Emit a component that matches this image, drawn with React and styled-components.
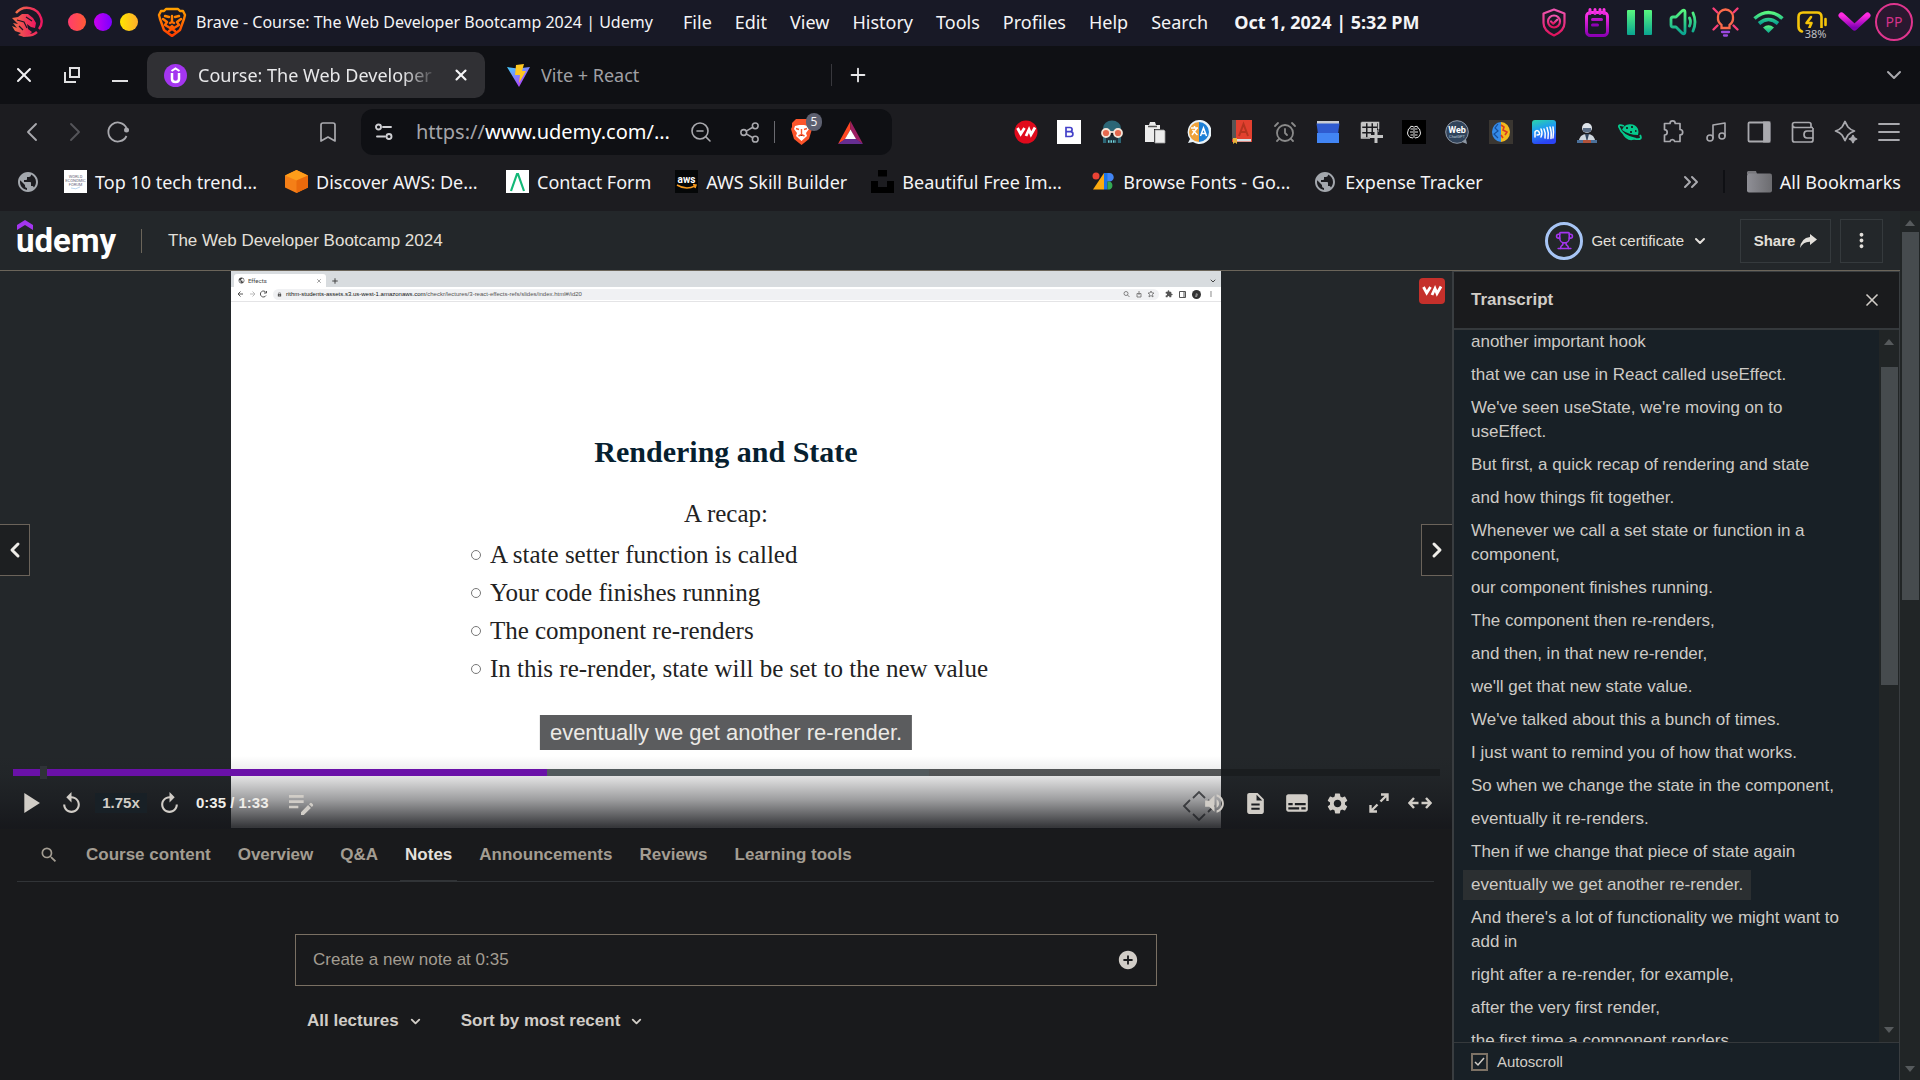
import React from "react";
import styled, { createGlobalStyle, css } from "styled-components";
import {
  X, Plus, ChevronDown, ChevronLeft, ChevronRight, ChevronsRight, Bookmark, ZoomOut, Share2,
  Music, AlarmClock, Trophy,
} from "lucide-react";
import {
  MdPlayArrow, MdReplay, MdVolumeUp, MdSettings, MdSubtitles, MdDescription, MdEditNote,
  MdAddCircle, MdSearch, MdMoreVert, MdPublic, MdLock, MdExtension,
} from "react-icons/md";

const Global = createGlobalStyle`
  * { box-sizing: border-box; }
  body { margin: 0; background: #191a1c; overflow: hidden; }
  button, input, select { font: inherit; color: inherit; margin: 0; }
  button { background: none; border: 0; padding: 0; cursor: pointer; }
  a { color: inherit; text-decoration: none; }
  svg { display: block; flex: none; }
  h1, h2, p, ul { margin: 0; padding: 0; }
`;

const Screen = styled.div`
  display: flex;
  flex-direction: column;
  height: 100vh;
  font: 17px/24px "Liberation Sans", Arial, sans-serif;
  color: #d1cdc7;
`;

/* ---------- desktop bar ---------- */
const Chrome = styled.div`
  font: 18px/24px "Noto Sans", sans-serif;
  color: #f4f4f6;
  white-space: nowrap;
`;
const DesktopBar = styled.header`
  display: flex;
  align-items: center;
  height: 46px;
  padding: 0 7px 2px 11px;
  background: #181926;
`;
const Dots = styled.div`
  display: flex;
  gap: 8px;
  margin: 0 19px 0 24px;
`;
const Dot = styled.button`
  width: 18px;
  height: 18px;
  border-radius: 50%;
  background: ${(p) => p.$fill};
`;
const WindowTitle = styled.span`
  width: 476px;
  margin: 0 11px 0 9px;
  font-size: 16px;
`;
const AppMenu = styled.nav`
  display: flex;
  gap: 23px;
`;
const Clock = styled.time`
  margin-left: 26px;
  font-weight: 700;
`;
const Tray = styled.div`
  display: flex;
  align-items: center;
  margin-left: auto;
`;
const TrayButton = styled.button`
  display: grid;
  place-items: center;
  width: ${(p) => (p.$tight ? "42px" : "43px")};
  height: 44px;
`;
const Avatar = styled.button`
  width: 38px;
  height: 38px;
  border: 2px solid #e0358e;
  border-radius: 50%;
  background: #2a1830;
  color: #d4328a;
  font-size: 14px;
  line-height: 24px;
`;
const Battery = styled.span`
  position: relative;
  display: block;
`;
const BatteryLevel = styled.span`
  position: absolute;
  right: 0;
  bottom: -6px;
  background: #181926;
  font-size: 11px;
  line-height: 11px;
  color: #c0c0c4;
`;

/* ---------- browser tabs ---------- */
const TabStrip = styled.div`
  display: flex;
  align-items: center;
  height: 58px;
  padding: 0 14px 0 12px;
  background: #0f1014;
`;
const WindowButtons = styled.div`
  display: flex;
  gap: 24px;
  margin-right: 15px;
`;
const IconButton = styled.button`
  display: grid;
  place-items: center;
  width: ${(p) => p.$w || 24}px;
  height: 32px;
  color: ${(p) => p.$color || "#a9a9ae"};
`;
const BrowserTab = styled.div`
  display: flex;
  align-items: center;
  gap: 11px;
  width: 338px;
  height: 46px;
  padding: 0 12px 0 ${(p) => (p.$active ? "17px" : "22px")};
  border-radius: 10px;
  background: ${(p) => (p.$active ? "#303034" : "transparent")};
  color: ${(p) => (p.$active ? "#e8e8ea" : "#a0a0a5")};
`;
const TabTitle = styled.span`
  flex: 1;
  overflow: hidden;
  ${(p) => p.$fade && css`mask-image: linear-gradient(90deg, #000 85%, transparent);`}
`;
const StripDivider = styled.span`
  width: 1px;
  height: 22px;
  margin: 0 14px 0 8px;
  background: #38383d;
`;
const End = styled.div`
  display: flex;
  align-items: center;
  margin-left: auto;
`;

/* ---------- toolbar ---------- */
const Toolbar = styled.div`
  display: flex;
  align-items: center;
  height: 56px;
  padding: 0 19px 0 16px;
  background: #1c1c20;
`;
const History = styled.div`
  display: flex;
  gap: 11px;
  width: 300px;
`;
const AddressBar = styled.div`
  display: flex;
  align-items: center;
  width: 531px;
  height: 46px;
  margin-left: 21px;
  padding: 0 28px 0 11px;
  border-radius: 12px;
  background: #0f1014;
`;
const AddressText = styled.span`
  width: 257px;
  margin: 0 3px 0 20px;
  font-size: 20px;
  color: #fff;
  span { color: #a4a4a9; }
`;
const Shield = styled.button`
  position: relative;
  margin: 0 26px 0 16px;
`;
const ShieldCount = styled.span`
  position: absolute;
  left: 15px;
  top: -6px;
  width: 16px;
  height: 18px;
  border-radius: 8px;
  background: #5d6070;
  font-size: 12px;
  line-height: 18px;
`;
const BarRule = styled.span`
  width: 1px;
  height: 22px;
  background: #6a6a70;
`;
const Extensions = styled.div`
  display: flex;
  justify-content: space-between;
  flex: 1;
  margin-left: 122px;
`;

/* ---------- bookmarks ---------- */
const BookmarksBar = styled.nav`
  display: flex;
  align-items: center;
  gap: 24px;
  height: 51px;
  padding: 0 19px 8px 16px;
  background: #1c1c20;
`;
const BookmarkLink = styled.a`
  display: flex;
  align-items: center;
  gap: 8px;
  width: ${(p) => (p.$clipped ? "197px" : "auto")};
`;
const BookmarkRule = styled.span`
  width: 2px;
  height: 23px;
  margin: 0 22px 0 20px;
  background: #0f1014;
`;

/* ---------- course page ---------- */
const Page = styled.div`
  display: flex;
  flex: 1;
  min-height: 0;
`;
const Course = styled.div`
  display: flex;
  flex-direction: column;
  flex: 1;
  min-width: 0;
`;
const CourseHeader = styled.header`
  display: flex;
  align-items: center;
  flex: none;
  height: 60px;
  padding: 0 17px 0 16px;
  border-bottom: 1px solid #6b655a;
  background: #23272a;
  color: #e3e0db;
`;
const Logo = styled.a`
  position: relative;
  width: 101px;
  font: 700 33px/44px Roboto, sans-serif;
  color: #fff;
  svg { position: absolute; left: 1px; top: 1px; }
`;
const HeaderRule = styled.span`
  width: 1px;
  height: 24px;
  margin: 0 26px 0 24px;
  background: #6b655a;
`;
const CourseTitle = styled.h1`
  font-size: 17px;
  font-weight: 400;
`;
const Certificate = styled.button`
  display: flex;
  align-items: center;
  gap: 8px;
  margin-right: 23px;
  font-size: 15px;
`;
const Ring = styled.span`
  display: grid;
  place-items: center;
  width: 38px;
  height: 38px;
  border: 3px solid #a7c5f5;
  border-radius: 50%;
  color: #a435f0;
`;
const HeaderButton = styled.button`
  display: flex;
  align-items: center;
  justify-content: center;
  gap: 5px;
  width: ${(p) => p.$w}px;
  height: 44px;
  margin-left: 9px;
  border: 1px solid #353a3d;
  font-size: 15px;
  font-weight: 700;
`;
const Columns = styled.div`
  display: flex;
  flex: 1;
  min-height: 0;
`;
const MainColumn = styled.main`
  flex: 1;
  min-width: 0;
`;

/* ---------- player ---------- */
const Stage = styled.section`
  position: relative;
  display: flex;
  justify-content: center;
  height: 558px;
  padding-bottom: 1px;
  background: #23272a;
`;
const Slide = styled.div`
  aspect-ratio: 16 / 9;
  height: 100%;
  background: #fff;
  color: #222;
`;
const MiniTabs = styled.div`
  display: flex;
  align-items: flex-end;
  height: 16px;
  padding: 0 4px 0 3px;
  background: #d8dcdf;
  color: #444;
`;
const MiniTab = styled.div`
  display: flex;
  align-items: center;
  gap: 3px;
  width: 92px;
  height: 13px;
  margin-right: 5px;
  padding: 0 4px;
  border-radius: 3px 3px 0 0;
  background: #fff;
  font: 6px/8px Roboto, sans-serif;
`;
const MiniAction = styled.span`
  display: flex;
  align-items: center;
  height: 13px;
`;
const MiniBar = styled.div`
  display: flex;
  align-items: center;
  gap: 6px;
  height: 15px;
  padding: 0 6px;
  border-bottom: 1px solid #e4e4e6;
  color: #555;
`;
const MiniUrl = styled.div`
  display: flex;
  align-items: center;
  gap: 4px;
  flex: 1;
  height: 11px;
  padding: 0 4px;
  border-radius: 6px;
  background: #f0f1f3;
  font: 6px/8px "Liberation Sans", sans-serif;
  color: #555;
  b { font-weight: 400; color: #111; }
`;
const Deck = styled.div`
  display: flex;
  flex-direction: column;
  padding-top: 131px;
  font: 25px/38px "Liberation Serif", serif;
  h2 {
    font-size: 30px;
    line-height: 38px;
    text-align: center;
    color: #06202f;
  }
  p {
    margin-top: 24px;
    text-align: center;
  }
`;
const Points = styled.ul`
  margin: 3px 0 0 240px;
  list-style: none;
`;
const Point = styled.li`
  display: flex;
  align-items: center;
  gap: 9px;
  &::before {
    content: "";
    width: 8px;
    height: 8px;
    border: 1px solid #777;
    border-radius: 50%;
  }
`;
const Caption = styled.p`
  position: absolute;
  left: 50%;
  bottom: 79px;
  transform: translateX(-50%);
  padding: 0 10px;
  background: #5b5c5e;
  color: #eceae6;
  font-size: 22px;
  line-height: 35px;
  white-space: nowrap;
`;
const Watermark = styled.svg`
  position: absolute;
  right: 236px;
  bottom: 6px;
`;
const SideNav = styled.button`
  position: absolute;
  top: 253px;
  ${(p) => p.$side}: 0;
  display: grid;
  place-items: center;
  width: ${(p) => (p.$side === "left" ? "30px" : "31px")};
  height: 52px;
  border: 1px solid #6b635a;
  border-${(p) => p.$side}: 0;
  background: #1d1f21;
  color: #efede9;
`;
const VnBadge = styled.button`
  position: absolute;
  top: 7px;
  right: 7px;
  display: grid;
  place-items: center;
  width: 26px;
  height: 26px;
  border-radius: 4px;
  background: #c5302b;
`;
const Controls = styled.div`
  position: absolute;
  inset: auto 0 0 0;
  padding: 13px 12px 0 13px;
  height: 73px;
  background: linear-gradient(rgba(21, 22, 26, 0), rgba(21, 22, 26, 0.1) 26%, rgba(21, 22, 26, 0.42) 60%, rgba(21, 22, 26, 0.86) 97%);
`;
const Progress = styled.div`
  position: relative;
  height: 7px;
  background: rgba(23, 26, 28, 0.72);
`;
const ProgressFill = styled.div`
  position: absolute;
  inset: 0 auto 0 0;
  background: ${(p) => p.$fill};
`;
const Knob = styled.div`
  position: absolute;
  left: 27px;
  top: -3px;
  width: 7px;
  height: 13px;
  background: #2f3337;
`;
const ControlRow = styled.div`
  display: flex;
  align-items: center;
  height: 54px;
  font-size: 15px;
  font-weight: 700;
  color: #d1cdc7;
`;
const Control = styled.button`
  display: grid;
  place-items: center;
  width: ${(p) => p.$w || 41}px;
  height: 36px;
`;
const Speed = styled.button`
  width: 52px;
  margin-right: 5px;
  line-height: 20px;
  background: #182026;
`;
const Elapsed = styled.span`
  margin: 0 15px 0 10px;
  color: #efede9;
`;

/* ---------- notes ---------- */
const Tabs = styled.nav`
  display: flex;
  height: 53px;
  margin: 0 18px 0 17px;
  padding: 0 0 0 17px;
  border-bottom: 1px solid #313437;
  color: #a39d92;
  font-weight: 700;
`;
const Tab = styled.button`
  height: 53px;
  margin-right: 17px;
  padding: 0 5px;
  border-bottom: 2px solid ${(p) => (p.$active ? "#313437" : "transparent")};
  color: ${(p) => (p.$active ? "#e4e1dc" : "inherit")};
`;
const Notes = styled.section`
  width: 862px;
  max-width: 90%;
  margin: 52px auto 0;
`;
const NoteField = styled.div`
  display: flex;
  align-items: center;
  height: 52px;
  padding: 0 17px;
  border: 1px solid #7a7063;
`;
const NoteInput = styled.input`
  flex: 1;
  border: 0;
  outline: 0;
  padding: 0;
  background: transparent;
  &::placeholder { color: #a39d92; opacity: 1; }
`;
const Filters = styled.div`
  display: flex;
  gap: 38px;
  padding: 23px 12px 0;
  font-weight: 700;
`;
const Filter = styled.button`
  display: flex;
  align-items: center;
  gap: 9px;
`;

/* ---------- transcript ---------- */
const Transcript = styled.aside`
  display: flex;
  flex-direction: column;
  flex: none;
  width: 448px;
  border: 1px solid #393d40;
  border-width: 1px 1px 0 2px;
  background: #182026;
`;
const TranscriptHead = styled.div`
  display: flex;
  align-items: center;
  justify-content: space-between;
  flex: none;
  height: 58px;
  padding: 0 17px 0 17px;
  border-bottom: 2px solid #35393c;
  background: #1a1b1d;
  h2 { font-size: 17px; line-height: 24px; }
`;
const Scroller = styled.div`
  display: flex;
  flex: 1;
  min-height: 0;
  overflow: hidden;
`;
const Cues = styled.div`
  display: flex;
  flex-direction: column;
  align-items: flex-start;
  flex: 1;
  gap: 3px;
  margin-top: -3px;
  overflow: hidden;
  padding: 0 12px 0 9px;
`;
const Cue = styled.button`
  flex: none;
  padding: 3px 8px;
  text-align: left;
  color: #cdcac5;
  background: ${(p) => (p.$current ? "#2b2f31" : "transparent")};
`;
const Track = styled.div`
  display: flex;
  flex-direction: column;
  align-items: center;
  flex: none;
  width: 20px;
  padding: ${(p) => p.$pad};
  background: #212526;
`;
const Thumb = styled.div`
  width: 17px;
  height: ${(p) => p.$h}px;
  margin: ${(p) => p.$gap}px 0 auto;
  background: #464b4e;
`;
const AutoScroll = styled.label`
  display: flex;
  align-items: center;
  gap: 9px;
  flex: none;
  height: 38px;
  padding: 0 17px 0;
  border-top: 1px solid #35393c;
  font-size: 15px;
`;
const TickBox = styled.span`
  display: grid;
  place-items: center;
  > * { grid-area: 1 / 1; }
  svg { pointer-events: none; }
`;
const Tick = styled.input`
  appearance: none;
  width: 17px;
  height: 18px;
  border: 2px solid #7d7265;
`;

/* ---------- drawings ---------- */
function Grad({ id, from, to }) {
  return (
    <defs>
      <linearGradient id={id} x1="0" y1="0" x2="0" y2="1">
        <stop offset="0" stopColor={from} />
        <stop offset="1" stopColor={to} />
      </linearGradient>
    </defs>
  );
}
const Dragon = () => (
  <svg width="33" height="32" viewBox="0 0 33 32" fill="none">
    <defs>
      <linearGradient id="dg" x1="0" y1="0" x2="1" y2="0"><stop stopColor="#f0704a" /><stop offset="1" stopColor="#ee1760" /></linearGradient>
    </defs>
    <path d="M5 7A14.500 14.500 0 0 1 30 12q2 6-2 11M26 26q-6 5-14 3" stroke="url(#dg)" strokeWidth="2.400" />
    <path d="M1 12l6-1 4-3 6 0 5 4 3 5-1 5-4-1-4-3 1 5 4 3-3 3-5 2-6-2 3-2-6-2-3-5 5 2-4-5 5 1z" fill="url(#dg)" />
    <path d="M6 14l7 2 3 6m-1-11l6 4M8 20l4 4" stroke="#181926" strokeWidth="1.200" />
  </svg>
);
const BraveLine = () => (
  <svg width="30" height="30" viewBox="0 0 30 30" fill="none" stroke="url(#bl)" strokeWidth="2.400" strokeLinejoin="round" strokeLinecap="round">
    <Grad id="bl" from="#ffa000" to="#ff3d00" />
    <path d="M9 2h12l2 2 3 0 2 4-1 4-4 11-8 6-8-6L3 12 2 8l2-4 3 0zM8 9l4 1m10-1l-4 1M6 12l4 3-2 3 5 3 2-2 2 2 5-3-2-3 4-3M15 9v6l-2 1m2-1l2 1M12 24l3-2 3 2" />
  </svg>
);
const ShieldTray = () => (
  <svg width="24" height="29" viewBox="0 0 24 29" fill="none" stroke="url(#st)" strokeWidth="2.200" strokeLinejoin="round">
    <Grad id="st" from="#ee55b0" to="#e0125c" />
    <path d="M12 1.500l10.500 4V15c0 6-5 10-10.500 12.500C6.500 25 1.500 21 1.500 15V5.500z" />
    <circle cx="12" cy="13.500" r="6" />
    <path d="M9 13.500l2.200 2.200 4-4" strokeLinecap="round" />
  </svg>
);
const NotepadTray = () => (
  <svg width="24" height="29" viewBox="0 0 24 29" fill="none" stroke="url(#nt)" strokeWidth="3" strokeLinecap="round">
    <Grad id="nt" from="#ff33e6" to="#8d00b5" />
    <rect x="1.500" y="4.500" width="21" height="23" rx="4" />
    <path d="M5 1.500v4M10 1.500v4M15 1.500v4M19 1.500v4M7.500 11.500h9M7.500 17h5" />
  </svg>
);
const PauseTray = () => (
  <svg width="25" height="25" viewBox="0 0 25 25" fill="url(#pt)">
    <Grad id="pt" from="#59f77f" to="#0aa591" />
    <path d="M1 0h7v25H1a1 1 0 0 1-1-1V1a1 1 0 0 1 1-1zM17 0h7a1 1 0 0 1 1 1v23a1 1 0 0 1-1 1h-7z" />
  </svg>
);
const VolumeTray = () => (
  <svg width="28" height="28" viewBox="0 0 28 28" fill="none" stroke="url(#vt)" strokeWidth="2.800" strokeLinejoin="round" strokeLinecap="round">
    <Grad id="vt" from="#59f77f" to="#0aa591" />
    <path d="M2 11q0-2 2-2h3l6-6q3-2 3 1v20q0 3-3 1l-6-6H4q-2 0-2-2zM20.500 10q2 4 0 8M24 5q4 9 0 18" />
  </svg>
);
const BulbTray = () => (
  <svg width="27" height="30" viewBox="0 0 27 30" fill="none" stroke="#fb6a4b" strokeWidth="2.300" strokeLinecap="round">
    <path d="M9.500 21v-3Q5.500 15 6 10a7.500 7.500 0 0 1 15 0q.5 5-3.500 8v3z" />
    <path d="M1.500 1.500l4 4M25.500 1.500l-4 4M1.500 22.500l4-4M25.500 22.500l-4-4" stroke="#fb3f78" />
    <path d="M10 25h7M12 28.500h3" stroke="#9b4ae0" />
  </svg>
);
const WifiTray = () => (
  <svg width="31" height="24" viewBox="0 0 31 24" fill="none" stroke="url(#wt)" strokeWidth="3.600">
    <Grad id="wt" from="#59f77f" to="#0aa591" />
    <path d="M1.500 8.500Q15.500-3.500 29.500 8.500M6 13.500q9.500-8 19 0" />
    <path d="M10 17.500q5.500-4.500 11 0L15.500 23z" fill="url(#wt)" stroke="none" />
  </svg>
);
const BatteryTray = () => (
  <svg width="30" height="22" viewBox="0 0 30 22" fill="none" stroke="#f5c50a" strokeWidth="2.600" strokeLinecap="round" strokeLinejoin="round">
    <path d="M5 20.500q-3.500-1-3.500-5V6q0-4.500 4.500-4.500h14Q24.500 1.500 24.500 6v12M28.500 8v6" />
    <path d="M14 6l-4.500 6h5l-2 4.500" />
  </svg>
);
const VTray = () => (
  <svg width="33" height="20" viewBox="0 0 33 20" fill="none" stroke="url(#vv)" strokeWidth="6" strokeLinecap="round" strokeLinejoin="round">
    <Grad id="vv" from="#ff2be0" to="#8300b5" />
    <path d="M3.500 3.500l13 12 13-12" />
  </svg>
);
const UdemyIcon = () => (
  <svg width="23" height="23" viewBox="0 0 23 23" fill="none">
    <circle cx="11.500" cy="11.500" r="11.500" fill="#a435f0" />
    <path d="M7.500 7l4-2.600 4 2.600" stroke="#fff" strokeWidth="2" />
    <path d="M8 9v6q0 3 3.500 3t3.500-3V9" stroke="#fff" strokeWidth="2.500" />
  </svg>
);
const ViteIcon = () => (
  <svg width="23" height="23" viewBox="0 0 23 23">
    <defs><linearGradient id="vi" x1="0" y1="0" x2=".7" y2="1"><stop stopColor="#41d1ff" /><stop offset="1" stopColor="#bd34fe" /></linearGradient></defs>
    <path d="M0 3l10.500 1.500L23 3 12 23z" fill="url(#vi)" />
    <path d="M9 1l8-1-2 7h4l-7 12 1-8H8z" fill="#ffc820" />
  </svg>
);
const RestoreIcon = () => (
  <svg width="16" height="16" viewBox="0 0 16 16" fill="none" stroke="currentColor" strokeWidth="2"><path d="M6 1h9v9H6zM1 5v10h11" /></svg>
);
const MinIcon = () => (
  <svg width="16" height="16" viewBox="0 0 16 16" stroke="currentColor" strokeWidth="2"><path d="M0 14h16" /></svg>
);
const ReloadIcon = () => (
  <svg width="24" height="24" viewBox="0 0 24 24" fill="none" stroke="currentColor" strokeWidth="1.800">
    <path d="M20.500 16A9.500 9.500 0 1 1 20.500 8" /><circle cx="20.500" cy="10" r="2.500" fill="currentColor" stroke="none" />
  </svg>
);
const TuneIcon = () => (
  <svg width="18" height="18" viewBox="0 0 18 18" fill="none" stroke="#d0d0d4" strokeWidth="1.900">
    <circle cx="3.500" cy="4" r="2.500" /><path d="M8 4h8M2 13.500h8" strokeLinecap="round" /><circle cx="14" cy="13.500" r="2.500" />
  </svg>
);
const BraveLion = () => (
  <svg width="21" height="26" viewBox="0 0 21 26">
    <path d="M5 0h11l4 4v4l1 2-3 10-7.500 6L3 20 0 10l1-2V4z" fill="#fb542b" />
    <path d="M4 7l4-1h5l4 1 1 3-3 4 1 3-5.500 5L5 17l1-3-3-4z" fill="#fff" />
    <path d="M5 9.500l3 1M16 9.500l-3 1M10.500 10v5M7.500 17l3-1.500 3 1.500" stroke="#fb542b" strokeWidth="1.400" />
  </svg>
);
const BatTriangle = () => (
  <svg width="25" height="23" viewBox="0 0 25 23">
    <path d="M12.500 0L0 23l7-4.500 5.500-10z" fill="#ff4724" /><path d="M12.500 0L25 23l-7-4.500-5.500-10z" fill="#9e1f63" />
    <path d="M0 23h25l-7-5H7z" fill="#662d91" /><path d="M12.500 8.500L18 18H7z" fill="#fff" />
  </svg>
);
const Vn = ({ disc }) => (
  <svg width="24" height="24" viewBox="0 0 24 24" fill="none">
    {disc && <circle cx="12" cy="12" r="11.500" fill="#e00a1c" />}
    <path d="M3.500 8l3.200 6L10.500 8M12 16l3-6.500 2 5 4-7" stroke="#fff" strokeWidth="2.800" />
  </svg>
);
const Globe = () => <MdPublic size={24} color="#a3a7ad" />;

const BIcon = () => (
  <svg width="24" height="24" viewBox="0 0 24 24"><path d="M0 0h24v24H0z" fill="#fff" /><path d="M9 7.500h4a2 2 0 0 1 0 4.200H9zm0 4.200h4.500a2.400 2.400 0 0 1 0 4.800H9z" fill="none" stroke="#4340c8" strokeWidth="1.700" /></svg>
);
const HackerIcon = () => (
  <svg width="24" height="24" viewBox="0 0 24 24">
    <path d="M3 11V8a9 7.500 0 0 1 18 0v3zM3 14h3v9H3zM18 14h3v9h-3z" fill="#2c6676" />
    <path d="M6 16h12v7H6z" fill="#20303a" />
    <circle cx="6" cy="13" r="4" fill="#e5694f" stroke="#f4e4d8" strokeWidth="1.800" /><circle cx="18" cy="13" r="4" fill="#e5694f" stroke="#f4e4d8" strokeWidth="1.800" />
    <path d="M10 12h4" stroke="#f4e4d8" strokeWidth="1.800" />
    <path d="M8 21.500h8" stroke="#6fd0d8" strokeWidth="2.500" strokeDasharray="1.500 1" />
  </svg>
);
const ClipIcon = () => (
  <svg width="24" height="24" viewBox="0 0 24 24" fill="#ececec"><path d="M2 5h4l1-3h5l1 3h4v4h-6v13H2z" /><path d="M12 10h9l1 1v12H12z" stroke="#999" strokeWidth=".8" /><path d="M5 6.500h9" stroke="#555" strokeWidth="1.500" /></svg>
);
const TranslateIcon = () => (
  <svg width="24" height="24" viewBox="0 0 24 24"><path d="M12 0a12 12 0 1 1-6 22l-5 1 2-4A12 12 0 0 1 12 0z" fill="#eaf3f8" /><path d="M12 2v20A10 10 0 0 1 12 2z" fill="#efa23a" /><path d="M12 2a10 10 0 0 1 0 20z" fill="#1c7fd6" /><path d="M4 8h7M7.500 6v2M5 15l5-7M5.500 10l5 5M13.500 16L16.500 8l3 8M14.500 13.500h4" fill="none" stroke="#fff" strokeWidth="1.500" /></svg>
);
const DictIcon = () => (
  <svg width="24" height="24" viewBox="0 0 24 24"><path d="M2 0h20v22H2z" fill="#e2402f" /><path d="M2 0h4v19H2z" fill="#555" /><path d="M3 19h18v2.500H3z" fill="#d7e0e4" /><path d="M3 18h4v6l-2-1.500L3 24z" fill="#e9b43a" /><path d="M9 16l4.500-12L18 16M10.500 12h6" stroke="#b5331f" strokeWidth="2" fill="none" /></svg>
);
const BlueIcon = () => (
  <svg width="24" height="24" viewBox="0 0 24 24"><path d="M1 1h22v4H1z" fill="#c9ccd2" /><path d="M.5 3.500h23L22 14H2z" fill="#2f5bd0" /><path d="M1 13h22v10H1z" fill="#4285f4" /></svg>
);
const GridIcon = () => (
  <svg width="24" height="24" viewBox="0 0 24 24" fill="none" stroke="#c4c4c4"><path d="M3 4.500h17M3 10h17M3 15.500h9" strokeWidth="4" strokeDasharray="4 1.500" /><path d="M2.500 2.500h17V9M2.500 2.500V18H11" strokeWidth="1.500" /><path d="M17 10v13M11 16.500h13" strokeWidth="3" /></svg>
);
const BrainDark = () => (
  <svg width="24" height="24" viewBox="0 0 24 24" fill="none" stroke="#fff" strokeWidth=".9"><path d="M0 0h24v24H0z" fill="#000" stroke="none" /><path d="M12 6v12M11 6.500Q8 5.500 8 8M13 6.500q3-1 3 1.500M8 8q-2 .5-2 3M16 8q2 .5 2 3M6 11q-1 2 0 4M18 11q1 2 0 4M6 15q1 3 5 3M18 15q-1 3-5 3M11 9H8.500M13 9h2.500M11 12H8M13 12h3M11 15H8.500M13 15h2.500" /></svg>
);
const WebGptIcon = () => (
  <svg width="24" height="24" viewBox="0 0 24 24"><circle cx="12" cy="12" r="11.300" fill="#31445c" stroke="#8e98a5" /><text x="12" y="13" fill="#fff" fontSize="9" fontWeight="700" fontFamily="Roboto, sans-serif" textAnchor="middle">Web</text><text x="12" y="18" fill="#b8c4d6" fontSize="4" fontFamily="Roboto, sans-serif" textAnchor="middle">ChatGPT</text><path d="M17 22l5 2-1-5z" fill="#8e98a5" /></svg>
);
const BrainColour = () => (
  <svg width="24" height="24" viewBox="0 0 24 24"><path d="M0 0h24v24H0z" fill="#3a3631" /><path d="M12 2v20A9 10 0 0 1 12 2z" fill="#348be8" /><path d="M12 2a9 10 0 0 1 0 20z" fill="#f2b91d" /><path d="M12 5l3 2-1 3 4 2-2 3M12 15l2 3" stroke="#d93d23" strokeWidth="1.600" fill="none" /><path d="M9 4L6 8l3 3-4 3 4 4" stroke="#164f9b" strokeWidth="1.200" fill="none" /></svg>
);
const WaveIcon = () => (
  <svg width="24" height="24" viewBox="0 0 24 24" fill="none"><defs><linearGradient id="wv" x1="0" y1="0" x2=".3" y2="1"><stop stopColor="#2cd6a8" /><stop offset=".45" stopColor="#1d9cf0" /><stop offset="1" stopColor="#2b44f5" /></linearGradient></defs><rect width="24" height="24" rx="3" fill="url(#wv)" /><path d="M3 17v-5q2-3 4 0t-2 3M9 9q2 4 0 8M12 9q2 4 1 9M15 7.500q2 5 1 11M18 7q2 5 1 11.500M21 7q1 5 0 11" stroke="#fff" strokeWidth="1.500" strokeLinecap="round" /></svg>
);
const RobotIcon = () => (
  <svg width="24" height="24" viewBox="0 0 24 24"><circle cx="12" cy="8" r="5" fill="#dfe4ea" /><path d="M8 8h8v3q-4 3-8 0z" fill="#5b6d86" /><path d="M4 22q0-8 8-8t8 8z" fill="#cfd7df" /><path d="M10 14h4l-2 8z" fill="#34475f" /><path d="M2 20h6v3H2zM16 20h6v3h-6z" fill="#4b709a" /><path d="M8 20h8v3H8z" fill="#b0523b" /></svg>
);
const PlanetIcon = () => (
  <svg width="24" height="24" viewBox="0 0 24 24"><path d="M4 10a8.500 8 0 0 1 16-1q1 3 0 6Q11 15 4 10zM4 13q6 5 14 6-9 4-14-6z" fill="#05c98c" /><path d="M6 6Q0 4 1 7q3 9 17 12 7 1 4-4" fill="none" stroke="#05c98c" strokeWidth="1.800" /><path d="M8 8h2M13 7h2M12 12h2M17 11h1.500" stroke="#10372c" strokeWidth="2" /></svg>
);
const PuzzleIcon = () => (
  <svg width="24" height="24" viewBox="0 0 24 24" fill="none" stroke="#a9a9ae" strokeWidth="1.700" strokeLinejoin="round">
    <path d="M3.500 3.500h5.500a2.600 2.600 0 0 1 5.200 0h4.800v6a2.700 2.700 0 0 1 0 5.400v6.600h-5.300a2.400 2.400 0 0 0-4.700 0H3.500V15a2.700 2.700 0 0 0 0-5.400z" />
  </svg>
);
const PanelIcon = () => (
  <svg width="24" height="24" viewBox="0 0 24 24" fill="none" stroke="#a9a9ae" strokeWidth="1.800"><rect x="1.500" y="2.500" width="21" height="19" rx="1" /><path d="M17 2.500h5.500v19H17z" fill="#a9a9ae" /></svg>
);
const WalletIcon = () => (
  <svg width="24" height="24" viewBox="0 0 24 24" fill="none" stroke="#a9a9ae" strokeWidth="1.700"><path d="M22 8v12q0 2-2 2H3.500Q1.500 22 1.500 20V4.500q0-2 2-2H18q2 0 2 2V7M1.500 5q0 2.500 3 2.500H22M22 11h-6q-3 0-3 3.500t3 3.500h6z" /></svg>
);
const SparkIcon = () => (
  <svg width="24" height="24" viewBox="0 0 24 24" fill="none" stroke="#a9a9ae" strokeWidth="1.700" strokeLinejoin="round"><path d="M11 1.500q1.500 3 3 5.500 2 2.500 6.500 4-4.500 1.500-6.500 4-1.500 2.500-3 5.500-1.500-3-3-5.500-2-2.500-6.500-4 4.500-1.500 6.500-4 1.500-2.500 3-5.500z" /><path d="M19 15.500q.6 3 3.500 3.500-2.900.6-3.500 3.500-.6-2.900-3.500-3.500 2.900-.5 3.500-3.500z" fill="#a9a9ae" /></svg>
);
const MenuIcon = () => (
  <svg width="24" height="24" viewBox="0 0 24 24" stroke="#a9a9ae" strokeWidth="1.800" strokeLinecap="round"><path d="M2 4h20M2 12h20M2 20h20" /></svg>
);

const WefIcon = () => (
  <svg width="23" height="23" viewBox="0 0 23 23"><path d="M0 0h23v23H0z" fill="#fff" /><g fill="#667" fontSize="4" fontFamily="Roboto, sans-serif" textAnchor="middle"><text x="11.500" y="8">WORLD</text><text x="11.500" y="12">ECONOMIC</text><text x="11.500" y="16">FORUM</text></g><path d="M7 18q5 2 9-1" stroke="#9cc4e8" fill="none" strokeWidth=".7" /></svg>
);
const CubeIcon = () => (
  <svg width="23" height="23" viewBox="0 0 23 23"><path d="M11.500 0L23 5.500v12L11.500 23 0 17.500v-12z" fill="#f57f17" /><path d="M11.500 0L23 5.500l-11.500 5L0 5.500z" fill="#ff9d1a" /><path d="M11.500 10.500L23 5.500v12L11.500 23z" fill="#ea6a0c" /></svg>
);
const ContactIcon = () => (
  <svg width="23" height="23" viewBox="0 0 23 23" fill="none"><path d="M0 0h23v23H0z" fill="#fff" /><path d="M5 21l6-17h1l6 17" stroke="#13b877" strokeWidth="2.200" /></svg>
);
const AwsIcon = () => (
  <svg width="23" height="23" viewBox="0 0 23 23"><path d="M0 0h23v23H0z" fill="#050708" /><text x="11.500" y="13" fill="#fff" fontSize="10" fontWeight="700" fontFamily="Roboto, sans-serif" textAnchor="middle">aws</text><path d="M2 15q9 5.500 18 1M18 14.500l3 .5-1 3" stroke="#f79a1e" strokeWidth="1.500" fill="none" /></svg>
);
const UnsplashIcon = () => (
  <svg width="23" height="23" viewBox="0 0 23 23" fill="#000"><path d="M7 0h9v6.500H7zM0 11h7v6h9v-6h7v12H0z" /></svg>
);
const FontsIcon = () => (
  <svg width="23" height="23" viewBox="0 0 23 23"><circle cx="4" cy="6" r="3.500" fill="#ea4335" /><path d="M1 19.500L12 3v16.500z" fill="#fbaa10" /><path d="M12 3h5.500a4 4 0 0 1 0 8.500H12z" fill="#4285f4" /><path d="M12 3h3.500v16.500H12z" fill="#1a73e8" /><path d="M15.500 11.500h2a4.200 4.200 0 0 1 0 8h-2z" fill="#34a853" /></svg>
);
const FolderIcon = () => (
  <svg width="25" height="22" viewBox="0 0 25 22"><defs><linearGradient id="fo"><stop stopColor="#8f8f96" /><stop offset="1" stopColor="#6c6c70" /></linearGradient></defs><path d="M1 0h8l1 3H0V1z" fill="#77777c" /><rect y="2.500" width="25" height="19" rx="2" fill="url(#fo)" /></svg>
);
const ShareArrow = () => (
  <svg width="17" height="14" viewBox="0 0 17 14" fill="currentColor"><path d="M10 0l7 5.500-7 5.500V7.800Q3.500 7.500 0 14 1 4 10 3z" /></svg>
);
const ExpandIcon = () => (
  <svg width="20" height="20" viewBox="0 0 20 20" fill="none" stroke="currentColor" strokeWidth="2.400"><path d="M12 1.500h6.500V8M18 2l-6.500 6.500M8 18.500H1.500V12M2 18l6.500-6.500" /></svg>
);
const WideIcon = () => (
  <svg width="24" height="12" viewBox="0 0 24 12" fill="none" stroke="currentColor" strokeWidth="2.400"><path d="M6 1L1.500 6 6 11M2 6h8.500M18 1l4.500 5-4.500 5M22 6h-8.500" /></svg>
);
const Arrow = ({ down }) => (
  <svg width="10" height="6" viewBox="0 0 10 6" fill="#565a5c"><path d={down ? "M0 0h10L5 6z" : "M0 6h10L5 0z"} /></svg>
);

/* ---------- data ---------- */
const MENUS = ["File", "Edit", "View", "History", "Tools", "Profiles", "Help", "Search"];
const TRAY = [["Security", ShieldTray], ["Notepad", NotepadTray], ["Pause", PauseTray], ["Volume", VolumeTray], ["Night light", BulbTray], ["Wi-Fi", WifiTray]];
const grey = "#a9a9ae";
const EXTENSIONS = [
  <Vn disc />, <BIcon />, <HackerIcon />, <ClipIcon />, <TranslateIcon />, <DictIcon />,
  <AlarmClock size={24} color="#8a8a8a" strokeWidth={1.8} />, <BlueIcon />, <GridIcon />, <BrainDark />, <WebGptIcon />,
  <BrainColour />, <WaveIcon />, <RobotIcon />, <PlanetIcon />,
  <PuzzleIcon />, <Music size={24} color={grey} strokeWidth={1.6} />,
  <PanelIcon />, <WalletIcon />, <SparkIcon />, <MenuIcon />,
];
const BOOKMARKS = [
  ["Top 10 tech trend...", WefIcon, true], ["Discover AWS: De...", CubeIcon, true], ["Contact Form", ContactIcon],
  ["AWS Skill Builder", AwsIcon], ["Beautiful Free Im...", UnsplashIcon, true], ["Browse Fonts - Go...", FontsIcon, true],
  ["Expense Tracker", Globe],
];
const POINTS = ["A state setter function is called", "Your code finishes running", "The component re-renders", "In this re-render, state will be set to the new value"];
const TABS = ["Course content", "Overview", "Q&A", "Notes", "Announcements", "Reviews", "Learning tools"];
const CURRENT = "eventually we get another re-render.";
const CUES = [
  "another important hook", "that we can use in React called useEffect.", "We've seen useState, we're moving on to useEffect.",
  "But first, a quick recap of rendering and state", "and how things fit together.",
  "Whenever we call a set state or function in a component,", "our component finishes running.",
  "The component then re-renders,", "and then, in that new re-render,", "we'll get that new state value.",
  "We've talked about this a bunch of times.", "I just want to remind you of how that works.",
  "So when we change the state in the component,", "eventually it re-renders.", "Then if we change that piece of state again",
  CURRENT, "And there's a lot of functionality we might want to add in", "right after a re-render, for example,",
  "after the very first render,", "the first time a component renders",
];

function BrowserChrome() {
  return (
    <Chrome>
      <DesktopBar>
        <Dragon />
        <Dots>
          <Dot aria-label="Close" $fill="linear-gradient(90deg, #ff3d6e, #ff5a36)" />
          <Dot aria-label="Minimise" $fill="linear-gradient(90deg, #c800f0, #7a00ff)" />
          <Dot aria-label="Maximise" $fill="linear-gradient(90deg, #ffe500, #ffae2b)" />
        </Dots>
        <BraveLine />
        <WindowTitle>Brave - Course: The Web Developer Bootcamp 2024 | Udemy</WindowTitle>
        <AppMenu>{MENUS.map((m) => <button key={m}>{m}</button>)}</AppMenu>
        <Clock>Oct 1, 2024 | 5:32 PM</Clock>
        <Tray>
          {TRAY.map(([name, Icon]) => <TrayButton key={name} aria-label={name}><Icon /></TrayButton>)}
          <TrayButton aria-label="Battery"><Battery><BatteryTray /><BatteryLevel>38%</BatteryLevel></Battery></TrayButton>
          <TrayButton $tight aria-label="More"><VTray /></TrayButton>
          <Avatar>PP</Avatar>
        </Tray>
      </DesktopBar>
      <TabStrip>
        <WindowButtons>
          <IconButton $color="#f0f0f2" aria-label="Close window"><X size={24} /></IconButton>
          <IconButton $color="#e0e0e2" aria-label="Restore window"><RestoreIcon /></IconButton>
          <IconButton $color="#e0e0e2" aria-label="Minimise window"><MinIcon /></IconButton>
        </WindowButtons>
        <BrowserTab $active>
          <UdemyIcon /><TabTitle $fade>Course: The Web Developer B</TabTitle>
          <IconButton $color="#f4f4f6" aria-label="Close tab"><X size={18} strokeWidth={2.8} /></IconButton>
        </BrowserTab>
        <BrowserTab><ViteIcon /><TabTitle>Vite + React</TabTitle></BrowserTab>
        <StripDivider />
        <IconButton $color="#e8e8ea" aria-label="New tab"><Plus size={22} /></IconButton>
        <End><IconButton aria-label="Search tabs"><ChevronDown size={24} /></IconButton></End>
      </TabStrip>
      <Toolbar>
        <History>
          <IconButton $w={32} aria-label="Back"><ChevronLeft size={32} strokeWidth={1.4} /></IconButton>
          <IconButton $w={32} $color="#55555a" aria-label="Forward"><ChevronRight size={32} strokeWidth={1.4} /></IconButton>
          <IconButton $w={32} aria-label="Reload"><ReloadIcon /></IconButton>
        </History>
        <IconButton aria-label="Bookmark this page"><Bookmark size={24} strokeWidth={1.7} /></IconButton>
        <AddressBar>
          <IconButton aria-label="Site settings"><TuneIcon /></IconButton>
          <AddressText><span>https://</span>www.udemy.com/...</AddressText>
          <IconButton $w={49} aria-label="Zoom out"><ZoomOut size={24} strokeWidth={1.6} /></IconButton>
          <IconButton $w={49} aria-label="Share"><Share2 size={23} strokeWidth={1.6} /></IconButton>
          <BarRule />
          <Shield aria-label="Brave Shields"><BraveLion /><ShieldCount>5</ShieldCount></Shield>
          <BatTriangle />
        </AddressBar>
        <Extensions>{EXTENSIONS.map((icon, i) => <IconButton key={i} aria-label={`Extension ${i + 1}`}>{icon}</IconButton>)}</Extensions>
      </Toolbar>
      <BookmarksBar>
        <Globe />
        {BOOKMARKS.map(([name, Icon, clipped]) => (
          <BookmarkLink key={name} href="#" $clipped={clipped}><Icon />{name}</BookmarkLink>
        ))}
        <End>
          <IconButton aria-label="More bookmarks"><ChevronsRight size={24} /></IconButton>
          <BookmarkRule />
          <BookmarkLink href="#"><FolderIcon />All Bookmarks</BookmarkLink>
        </End>
      </BookmarksBar>
    </Chrome>
  );
}

function Player() {
  return (
    <Stage>
      <Slide>
        <MiniTabs>
          <MiniTab><MdPublic size={7} />Effects<End><X size={6} /></End></MiniTab>
          <MiniAction><Plus size={8} strokeWidth={3} /></MiniAction>
          <End><MiniAction><ChevronDown size={8} strokeWidth={3} /></MiniAction></End>
        </MiniTabs>
        <MiniBar>
          <svg width="30" height="8" viewBox="0 0 30 8" fill="none" stroke="currentColor"><path d="M6 4H1l2.500-2.500M1 4l2.500 2.500" /><path d="M13 4h5l-2.500-2.500M18 4l-2.500 2.500" stroke="#bbb" /><path d="M29 2.500A3 3 0 1 0 29 5.500M29.500 1v2H27" /></svg>
          <MiniUrl>
            <MdLock size={5} />
            <span><b>rithm-students-assets.s3.us-west-1.amazonaws.com</b>/checkr/lectures/3-react-effects-refs/slides/index.html#/id20</span>
            <End><svg width="32" height="8" viewBox="0 0 32 8" fill="none" stroke="#777" strokeWidth=".9"><circle cx="3" cy="3.500" r="2" /><path d="M4.500 5L6.500 7M14 3.500h4v3.500h-4zM16 1v4M28 1l1 2h2l-1.500 1.500.5 2.500-2-1.500L26 7l.5-2.500L25 3h2z" /></svg></End>
          </MiniUrl>
          <MdExtension size={8} />
          <svg width="7" height="7" viewBox="0 0 7 7" fill="none" stroke="currentColor"><path d="M.5.5h6v6h-6zM5 .5v6" /></svg>
          <svg width="9" height="9" viewBox="0 0 9 9"><circle cx="4.500" cy="4.500" r="4.500" fill="#333" /><path d="M3 7l1-4 2 1-1 3" fill="#888" /></svg>
          <MdMoreVert size={8} />
        </MiniBar>
        <Deck>
          <h2>Rendering and State</h2>
          <p>A recap:</p>
          <Points>{POINTS.map((p) => <Point key={p}>{p}</Point>)}</Points>
        </Deck>
      </Slide>
      <Watermark width="34" height="34" viewBox="0 0 34 34" fill="none" stroke="#5d5f62" strokeWidth="1.800">
        <path d="M11 9l6-6 6 6M8 11l-6 6 6 6M11 25l6 6 6-6M26 11l6 6-6 6" />
      </Watermark>
      <Controls>
        <Progress>
          <ProgressFill $fill="#525a5d" style={{ width: "64.2%" }} />
          <ProgressFill $fill="#6a11a8" style={{ width: "37.4%" }} />
          <Knob />
        </Progress>
        <ControlRow>
          <Control $w={34} aria-label="Play"><MdPlayArrow size={34} /></Control>
          <Control $w={48} aria-label="Rewind 5 seconds"><MdReplay size={25} /></Control>
          <Speed>1.75x</Speed>
          <Control $w={34} aria-label="Forward 5 seconds"><MdReplay size={25} transform="scale(-1 1)" /></Control>
          <Elapsed>0:35 / 1:33</Elapsed>
          <Control $w={34} aria-label="Add note"><MdEditNote size={32} /></Control>
          <End>
            <Control aria-label="Volume"><MdVolumeUp size={25} /></Control>
            <Control aria-label="Transcript"><MdDescription size={25} /></Control>
            <Control aria-label="Captions"><MdSubtitles size={26} /></Control>
            <Control aria-label="Settings"><MdSettings size={25} /></Control>
            <Control aria-label="Fullscreen"><ExpandIcon /></Control>
            <Control aria-label="Expanded view"><WideIcon /></Control>
          </End>
        </ControlRow>
      </Controls>
      <Caption>{CURRENT}</Caption>
      <SideNav $side="left" aria-label="Previous lecture"><ChevronLeft size={24} strokeWidth={3} /></SideNav>
      <SideNav $side="right" aria-label="Next lecture"><ChevronRight size={24} strokeWidth={3} /></SideNav>
      <VnBadge aria-label="Video notes"><Vn /></VnBadge>
    </Stage>
  );
}

export default function App() {
  return (
    <Screen>
      <Global />
      <BrowserChrome />
      <Page>
        <Course>
          <CourseHeader>
            <Logo href="#">
              udemy
              <svg width="16" height="10" viewBox="0 0 16 10"><path d="M0 5L8 0l8 5v5L8 5 0 10z" fill="#a435f0" /></svg>
            </Logo>
            <HeaderRule />
            <CourseTitle>The Web Developer Bootcamp 2024</CourseTitle>
            <End>
              <Certificate>
                <Ring><Trophy size={19} /></Ring>Get certificate<ChevronDown size={16} strokeWidth={3} />
              </Certificate>
              <HeaderButton $w={91}>Share<ShareArrow /></HeaderButton>
              <HeaderButton $w={43} aria-label="More options"><MdMoreVert size={23} /></HeaderButton>
            </End>
          </CourseHeader>
          <Columns>
            <MainColumn>
              <Player />
              <Tabs>
                <Tab aria-label="Search"><MdSearch size={20} /></Tab>
                {TABS.map((t) => <Tab key={t} $active={t === "Notes"}>{t}</Tab>)}
              </Tabs>
              <Notes>
                <NoteField>
                  <NoteInput aria-label="New note" placeholder="Create a new note at 0:35" />
                  <button aria-label="Add note"><MdAddCircle size={22} /></button>
                </NoteField>
                <Filters>
                  <Filter>All lectures<ChevronDown size={15} strokeWidth={3} /></Filter>
                  <Filter>Sort by most recent<ChevronDown size={15} strokeWidth={3} /></Filter>
                </Filters>
              </Notes>
            </MainColumn>
            <Transcript>
              <TranscriptHead>
                <h2>Transcript</h2>
                <button aria-label="Close transcript"><X size={20} /></button>
              </TranscriptHead>
              <Scroller>
                <Cues>{CUES.map((c) => <Cue key={c} $current={c === CURRENT}>{c}</Cue>)}</Cues>
                <Track $pad="9px 0"><Arrow /><Thumb $h={318} $gap={22} /><Arrow down /></Track>
              </Scroller>
              <AutoScroll>
                <TickBox>
                  <Tick type="checkbox" defaultChecked />
                  <svg width="11" height="11" viewBox="0 0 11 11" fill="none" stroke="#d1cdc7" strokeWidth="1.500"><path d="M1 6l3 3 6-7" /></svg>
                </TickBox>
                Autoscroll
              </AutoScroll>
            </Transcript>
          </Columns>
        </Course>
        <Track $pad="9px 0 8px"><Arrow /><Thumb $h={368} $gap={6} /><Arrow down /></Track>
      </Page>
    </Screen>
  );
}
